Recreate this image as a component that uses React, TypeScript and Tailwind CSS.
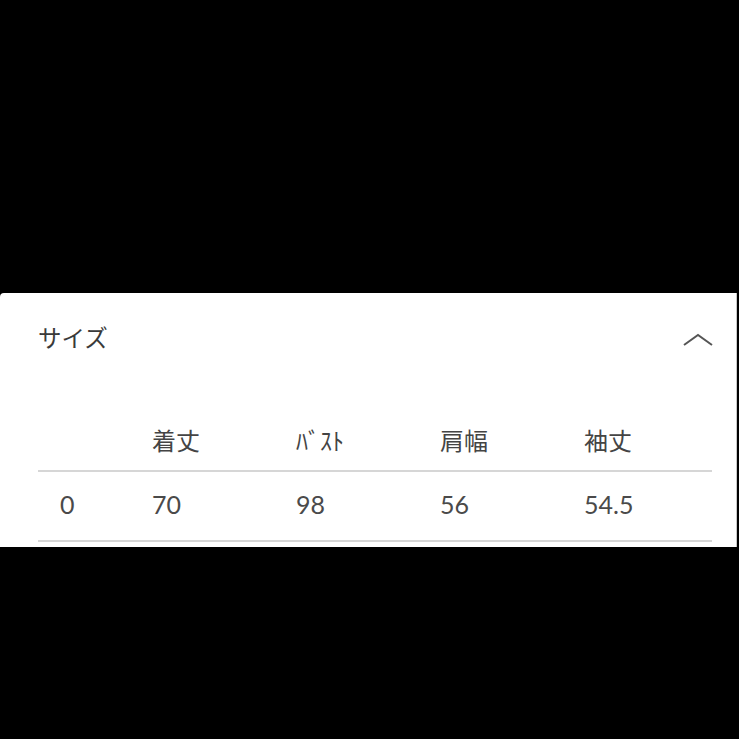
const headers = ['着丈', 'ﾊﾞｽﾄ', '肩幅', '袖丈']
const values = ['70', '98', '56', '54.5']

export default function App() {
  return (
    <div className="h-[739px] bg-black pt-[293px]">
      <div
        className="h-[254px] w-[737px] rounded-tl-[4px] border-r border-[#c8c8c8] bg-white pl-[38px] pr-[24px] pt-[28px] text-[#444]"
        style={{ fontFamily: '"Noto Sans CJK JP", "Noto Sans", sans-serif' }}
      >
        <div className="flex h-8 items-center justify-between">
          <span className="text-[23.5px] leading-8 text-[#3a3a3a]">サイズ</span>
          <svg width="30" height="14" viewBox="0 0 30 14" className="mr-[-1px] mt-[6px]">
            <path d="M1 12 L15 2 L29 12" fill="none" stroke="#555" strokeWidth="2" />
          </svg>
        </div>
        <div className="mt-[71px] grid h-[48px] grid-cols-[114px_144px_144px_144px_1fr] border-b-2 border-[#d6d6d6]">
          <div />
          {headers.map(h => (
            <div key={h} className="text-[24px] leading-8">
              {h}
            </div>
          ))}
        </div>
        <div
          className="grid h-[70px] grid-cols-[114px_144px_144px_144px_1fr] items-center border-b-2 border-[#d6d6d6] pb-[2px] text-[25px] text-[#4a4a4a]"
          style={{ fontFamily: '"Lato", "Noto Sans", sans-serif' }}
        >
          <div className="pl-[22px]">0</div>
          {values.map(v => (
            <div key={v}>{v}</div>
          ))}
        </div>
      </div>
    </div>
  )
}
